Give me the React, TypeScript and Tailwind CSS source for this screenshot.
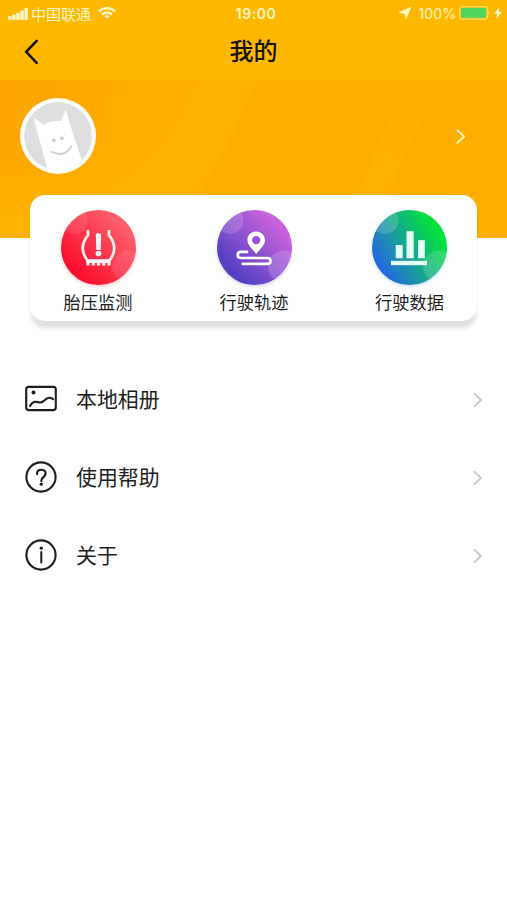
import type { ReactNode } from "react";

function StatusBar() {
  return (
    <div className="flex h-[27px] items-center text-[#fff6c8]">
      <div className="flex flex-1 items-center pl-2">
        <svg className="h-3 w-5 shrink-0" viewBox="0 0 20 12" fill="currentColor">
          <rect x="0" y="8" width="3.5" height="4" rx="1" />
          <rect x="4.1" y="6.5" width="3.5" height="5.5" rx="1" />
          <rect x="8.2" y="4.7" width="3.5" height="7.3" rx="1" />
          <rect x="12.3" y="2.5" width="3.5" height="9.5" rx="1" />
          <rect x="16.4" y="0" width="3.5" height="12" rx="1" />
        </svg>
        <span className="ml-[3px] text-[15px] leading-5">中国联通</span>
        <svg className="-mt-px ml-[7px] h-3 w-[18px]" viewBox="0 0 18 12" fill="none" stroke="currentColor" strokeWidth="2.5">
          <path d="M1 4.4a11.4 11.4 0 0 1 16 0" />
          <path d="M4 7.5a7.1 7.1 0 0 1 10 0" />
          <path d="M9 11.8 6.3 9.2a3.9 3.9 0 0 1 5.4 0Z" fill="currentColor" stroke="none" />
        </svg>
      </div>
      <span className="pl-[2px] font-['Inter','Noto_Sans_CJK_SC',sans-serif] text-[14px] font-semibold tracking-[0.5px]">19:00</span>
      <div className="flex flex-1 items-center justify-end pr-[5px]">
        <svg className="-mt-0.5 h-3 w-3" viewBox="0 0 12 12" fill="currentColor">
          <path d="M12 .2 7 11.8 5.9 6.4 0 5.5Z" stroke="currentColor" strokeWidth="0.7" />
        </svg>
        <span className="ml-[7px] font-['Inter','Noto_Sans_CJK_SC',sans-serif] text-[14px] tracking-[0.1px]">100%</span>
        <svg className="-mt-px ml-[3px] h-[14px] w-[32px]" viewBox="0 0 32 14">
          <rect x="0.7" y="0.7" width="27.6" height="12.4" rx="2.5" fill="none" stroke="#ffdf68" strokeWidth="1.2" />
          <rect x="2" y="2" width="25" height="9.8" rx="1" fill="#4fd65f" />
          <path d="M29.5 4.5q2.2 2.4 0 5Z" fill="#ffe583" />
        </svg>
        <svg className="-mt-px ml-[3px] h-[12px] w-[8px]" viewBox="0 0 8 12" fill="currentColor">
          <path d="M5.3 0 0 6.8h3.1L2.2 12 8 4.8H4.7Z" />
        </svg>
      </div>
    </div>
  );
}

function Chevron({ className }: { className: string }) {
  return (
    <svg className={className} viewBox="0 0 10 18" fill="none" stroke="currentColor" strokeWidth="2">
      <path d="M1 1.5 9 9l-8 7.5" />
    </svg>
  );
}

function Avatar() {
  return (
    <svg className="h-[76px] w-[76px]" viewBox="0 0 76 76">
      <defs>
        <clipPath id="face">
          <circle cx="38" cy="38" r="35" />
        </clipPath>
      </defs>
      <circle cx="38" cy="38" r="38" fill="white" />
      <circle cx="38" cy="38" r="33.9" fill="#dedde0" />
      <g clipPath="url(#face)">
        <path d="M13.6 19.5 23.6 27q2.4-2.4 7.4-3.6 4.5-1 10-.5L46 11.2 49.5 25 62.5 64 50 78H29Z" fill="white" />
      </g>
      <circle cx="33.8" cy="42.3" r="1.9" fill="#cfced1" />
      <circle cx="41.8" cy="40.3" r="1.9" fill="#cfced1" />
      <path d="M31.5 53.8q13 6.3 20-5.5" fill="none" stroke="#cfced1" strokeWidth="1.8" strokeLinecap="round" />
    </svg>
  );
}

function Badge({ id, from, to, angled, children }: { id: string; from: string; to: string; angled?: boolean; children: ReactNode }) {
  return (
    <svg className="h-[75px] w-[75px] overflow-visible" viewBox="0 0 75 75">
      <defs>
        <linearGradient id={id} x1={angled ? "0.1" : "0.25"} y1={angled ? "0.72" : "0.85"} x2="0.86" y2="0.25">
          <stop offset="0" stopColor={from} />
          <stop offset="1" stopColor={to} />
        </linearGradient>
        <clipPath id={`${id}-clip`}>
          <circle cx="37.5" cy="37.5" r="37.5" />
        </clipPath>
        <filter id={`${id}-glow`} x="-20%" y="-20%" width="140%" height="140%">
          <feGaussianBlur stdDeviation="2" />
        </filter>
      </defs>
      <circle cx="37.5" cy="39.5" r="36.5" fill={from} opacity="0.3" filter={`url(#${id}-glow)`} />
      <circle cx="37.5" cy="37.5" r="37.5" fill={`url(#${id})`} />
      <g clipPath={`url(#${id}-clip)`} fill="white" fillOpacity={id === "tire" ? 0.1 : 0.17}>
        <circle cx="13" cy="10.5" r="13.5" />
        <circle cx="67" cy="56.5" r="16" />
      </g>
      {children}
    </svg>
  );
}

function TirePressureIcon() {
  return (
    <Badge id="tire" from="#fb1030" to="#fd5e6a">
      <g fill="none" stroke="#fff0f1" strokeWidth="2.7">
        <path d="M27 20v5.2C20.4 33.5 19.8 42 26.6 50.5h21.8C55.2 42 54.6 33.5 48 25.2V20" strokeLinejoin="round" />
        <path d="M25.2 51.3h24.6" strokeWidth="3.4" />
        <path d="M25.4 54h24.2" strokeDasharray="3.2 2.05" strokeWidth="2.8" />
      </g>
      <path d="M34.8 25.8a2.7 2.7 0 0 1 5.4 0l-.5 14.2h-4.4Z" fill="#fff0f1" />
      <circle cx="37.5" cy="43.6" r="2.9" fill="#fff0f1" />
    </Badge>
  );
}

function TrackIcon() {
  return (
    <Badge id="track" from="#5540c4" to="#c963dc">
      <path fillRule="evenodd" d="M39.2 21.5c-5 0-8.8 3.7-8.8 8.6 0 5.7 5.7 9.3 8.8 14 3.1-4.7 8.8-8.3 8.8-14 0-4.9-3.8-8.6-8.8-8.6Zm0 4.4a4.2 4.2 0 1 1 0 8.4 4.2 4.2 0 0 1 0-8.4Z" fill="white" />
      <path d="M31.2 41.9h-7.1c-4.5 0-4.5 6.1 0 6.1h26.2c4.3 0 4.3 5.9 0 5.9H24.6" fill="none" stroke="white" strokeWidth="2.7" />
    </Badge>
  );
}

function DataIcon() {
  return (
    <Badge id="data" from="#266ae0" to="#02e43a" angled>
      <g fill="#e4fff4">
        <rect x="23.7" y="35" width="7" height="13.3" />
        <rect x="34.5" y="21.2" width="7.2" height="27.1" />
        <rect x="46" y="30.2" width="6.8" height="18.1" />
        <rect x="19" y="50.8" width="36" height="4.4" />
      </g>
    </Badge>
  );
}

const features = [
  { label: "胎压监测", icon: <TirePressureIcon /> },
  { label: "行驶轨迹", icon: <TrackIcon /> },
  { label: "行驶数据", icon: <DataIcon /> },
];

const rows = [
  {
    label: "本地相册",
    icon: (
      <>
        <rect x="1.2" y="3.9" width="29.6" height="23.2" rx="2.5" />
        <circle cx="8.5" cy="9.6" r="2" fill="currentColor" stroke="none" />
        <path d="M5 23c3.5-6.6 6.8-3.6 10.3-3.5 5.2.1 5.5-7.8 12.8-3.4" />
      </>
    ),
  },
  {
    label: "使用帮助",
    icon: (
      <>
        <circle cx="16" cy="16" r="14.6" />
        <path d="M12 13.1c0-6 8.6-5.4 8.6-.6 0 3.6-4.3 3.7-4.3 7.2v.4" strokeWidth="2.2" />
        <circle cx="16.3" cy="23.2" r="1.6" fill="currentColor" stroke="none" />
      </>
    ),
  },
  {
    label: "关于",
    icon: (
      <>
        <circle cx="16" cy="16" r="14.6" />
        <path d="M16.3 13v10.6" strokeWidth="2" />
        <circle cx="16.3" cy="9.2" r="1.6" fill="currentColor" stroke="none" />
      </>
    ),
  },
];

export default function App() {
  return (
    <div className="h-[900px] w-[507px] overflow-hidden bg-white font-['Noto_Sans_CJK_SC',sans-serif] text-[#1c1c1c]">
      <header className="h-20 bg-[#ffb800]">
        <StatusBar />
        <div className="grid h-[47px] grid-cols-[1fr_auto_1fr] items-center">
          <svg className="mt-0.5 ml-6 h-[25px] w-[15px]" viewBox="0 0 15 25" fill="none" stroke="#151000" strokeWidth="2.6" strokeLinecap="round">
            <path d="M12.7 1.9 2.2 12.8l10.5 11" />
          </svg>
          <h1 className="-mt-px text-[24px] leading-9 font-medium text-[#151000]">我的</h1>
        </div>
      </header>

      <section className="relative h-[158px] bg-[#ffae00]">
        <svg className="absolute inset-0 h-full w-full" viewBox="0 0 507 158">
          <defs>
            <linearGradient id="wash" gradientUnits="userSpaceOnUse" x1="0" y1="20" x2="165" y2="75">
              <stop offset="0" stopColor="#ffa400" />
              <stop offset="0.5" stopColor="#ffa900" />
              <stop offset="1" stopColor="#ffb100" />
            </linearGradient>
            <linearGradient id="beam" x1="0" y1="1" x2="0.6" y2="0">
              <stop offset="0" stopColor="#ffb400" />
              <stop offset="1" stopColor="#ffaf00" />
            </linearGradient>
            <linearGradient id="fade" x1="0" y1="0" x2="0" y2="1">
              <stop offset="0.45" stopColor="#ffb300" stopOpacity="0" />
              <stop offset="0.9" stopColor="#ffb300" />
            </linearGradient>
          </defs>
          <path d="M0 0h258C237 41 225 80 195 118v40H0Z" fill="#ffb300" />
          <path d="M0 0h198C184 42 150 82 100 112L0 158Z" fill="url(#wash)" />
          <path d="M0 0h190v158H0Z" fill="url(#fade)" />
          <path d="M402 0h35c-13 40-34 75-50 118h-32c19-38 34-76 47-118Z" fill="url(#beam)" />
        </svg>
        <div className="relative flex h-28 items-center justify-between pr-[42px] pl-5">
          <Avatar />
          <Chevron className="h-[17px] w-[9px] text-[#fff4c4]" />
        </div>
      </section>

      <section className="relative mx-[30px] -mt-[43px] grid h-[126px] grid-cols-[136px_176px_135px] rounded-[15px] bg-white shadow-[0_8px_4px_-1px_rgba(0,0,0,0.13)]">
        {features.map((feature) => (
          <div key={feature.label} className="flex flex-col items-center pt-[15px]">
            {feature.icon}
            <span className="mt-[5px] text-[17.2px] leading-6">{feature.label}</span>
          </div>
        ))}
      </section>

      <nav className="mt-[39px]">
        {rows.map((row) => (
          <div key={row.label} className="flex h-[78px] items-center pr-[25px] pl-[25px]">
            <svg className="h-8 w-8" viewBox="0 0 32 32" fill="none" stroke="currentColor" strokeWidth="2.1" strokeLinecap="round">
              {row.icon}
            </svg>
            <span className="-mt-0.5 ml-[19px] flex-1 text-[20.9px] leading-8">{row.label}</span>
            <Chevron className="mt-px h-[16px] w-[9px] text-[#c4c4c4]" />
          </div>
        ))}
      </nav>
    </div>
  );
}
